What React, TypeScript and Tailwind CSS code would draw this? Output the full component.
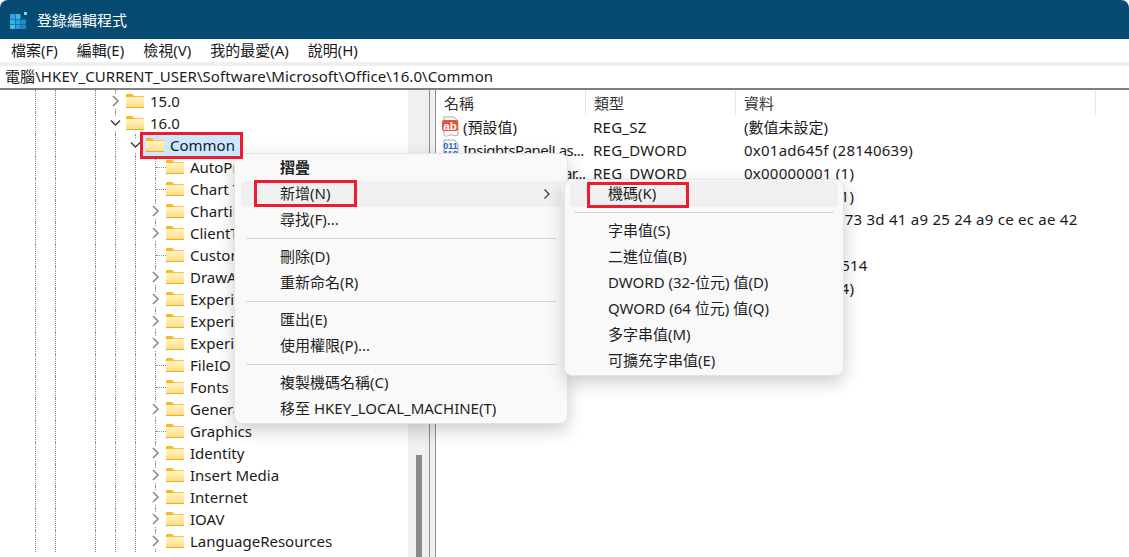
import React from "react";

const FONT = "[font-family:'Noto_Sans','Noto_Sans_CJK_TC',sans-serif]";

function Folder() {
  return (
    <svg width="18" height="14" viewBox="0 0 18 14" className="shrink-0">
      <defs>
        <linearGradient id="fb" x1="0" y1="0" x2="0" y2="1">
          <stop offset="0" stopColor="#fff2c2" />
          <stop offset="0.6" stopColor="#ffe79f" />
          <stop offset="1" stopColor="#fcd873" />
        </linearGradient>
      </defs>
      <path d="M0 1C0 .4.4 0 1 0h5l2 2v2H0z" fill="#fbb81f" />
      <rect x="0" y="3" width="18" height="11" fill="url(#fb)" />
      <path d="M0 3h7l1.5-1H18v1z" fill="#fcc63f" />
      <rect x="0" y="13" width="18" height="1" fill="#eeab2c" />
    </svg>
  );
}

function Chevron({ open }: { open?: boolean }) {
  return (
    <svg width="14" height="14" viewBox="0 0 14 14" className="bg-white">
      {open ? (
        <path d="M3 4.5 7.5 9 12 4.5" fill="none" stroke="#3c3c3c" strokeWidth="1.4" />
      ) : (
        <path d="M5 2 10 7l-5 5" fill="none" stroke="#8a8a8a" strokeWidth="1.6" />
      )}
    </svg>
  );
}

type Level = "a" | "b" | "c";

function Guides({ level }: { level: Level }) {
  const line = "w-5 h-full shrink-0 border-l border-dotted border-[#8c8c8c]";
  return (
    <>
      <div className={line} />
      <div className={line} />
      <div className="w-5 h-full shrink-0" />
      <div className={line} />
      {level !== "a" && <div className={line} />}
      {level === "c" && <div className={line} />}
    </>
  );
}

function Expander({ kids, open }: { kids?: boolean; open?: boolean }) {
  return (
    <div className="relative w-[11px] h-full shrink-0 border-l border-dotted border-[#8c8c8c]">
      {kids ? (
        <div className="absolute -left-[8px] top-[4px]">
          <Chevron open={open} />
        </div>
      ) : (
        <div className="absolute left-0 top-[11px] w-[10px] border-t border-dotted border-[#8c8c8c]" />
      )}
    </div>
  );
}

function TreeRow({ level, label, kids, open }: { level: Level; label: string; kids?: boolean; open?: boolean }) {
  return (
    <div className="flex h-[22px] items-center pl-[35px]">
      <Guides level={level} />
      <Expander kids={kids} open={open} />
      <Folder />
      <span className="ml-[6px] whitespace-nowrap">{label}</span>
    </div>
  );
}

const children: [string, boolean][] = [
  ["AutoProof", false],
  ["Chart Templates", false],
  ["Charting", true],
  ["ClientTelemetry", true],
  ["CustomUI", false],
  ["DrawAlerts", true],
  ["Experiment", true],
  ["ExperimentEcs", true],
  ["ExperimentTas", true],
  ["FileIO", false],
  ["Fonts", false],
  ["General", true],
  ["Graphics", false],
  ["Identity", true],
  ["Insert Media", true],
  ["Internet", true],
  ["IOAV", true],
  ["LanguageResources", true],
];

function AbIcon() {
  return (
    <svg width="19" height="22" viewBox="0 0 19 22" className="shrink-0">
      <path d="M3 1h10l4 4v14c-3 2-5-1-8 0s-4 2-6 0z" fill="#fff" stroke="#a8a8a8" />
      <rect x="1" y="4" width="16" height="11" rx="2" fill="#e2563a" />
      <text x="9" y="13.5" textAnchor="middle" fontSize="11.5" fontWeight="700" fill="#fff" fontFamily="'Liberation Sans',sans-serif">ab</text>
    </svg>
  );
}

function BinIcon() {
  return (
    <svg width="19" height="22" viewBox="0 0 19 22" className="shrink-0">
      <path d="M3 1h10l4 4v14c-3 2-5-1-8 0s-4 2-6 0z" fill="#fff" stroke="#a8a8a8" />
      <text x="9.5" y="10" textAnchor="middle" fontSize="9" fontWeight="700" fill="#2f5fc0" fontFamily="'Liberation Sans',sans-serif">011</text>
      <text x="9.5" y="18" textAnchor="middle" fontSize="9" fontWeight="700" fill="#2f5fc0" fontFamily="'Liberation Sans',sans-serif">110</text>
    </svg>
  );
}

const values: [React.ReactNode, string, string, string][] = [
  [<AbIcon />, "(預設值)", "REG_SZ", "(數值未設定)"],
  [<BinIcon />, "InsightsPanelLas...", "REG_DWORD", "0x01ad645f (28140639)"],
  [<BinIcon />, "InsightsPanelStar...", "REG_DWORD", "0x00000001 (1)"],
  [<BinIcon />, "LanguageSet", "REG_DWORD", "0x00000001 (1)"],
  [<BinIcon />, "MigrationData", "REG_BINARY", "f4 1c 8e 02 1f 73 3d 41 a9 25 24 a9 ce ec ae 42"],
  [<AbIcon />, "ProductId", "REG_SZ", ""],
  [<AbIcon />, "SessionId", "REG_SZ", "13324561004514"],
  [<BinIcon />, "UpdateFlag", "REG_DWORD", "0x00000004 (4)"],
];

function Item({ label, bold, hover, arrow, sub, children: extra }: { label: string; bold?: boolean; hover?: boolean; arrow?: boolean; sub?: boolean; children?: React.ReactNode }) {
  return (
    <div className={`relative h-[26px] flex items-center pb-[2px] rounded-[4px] ${sub ? "mx-[5px] pl-[38px]" : "mx-[6px] pl-[39px]"} ${hover ? "bg-[#f0f0f0]" : ""} ${bold ? "font-bold" : ""}`}>
      <span className="whitespace-nowrap">{label}</span>
      {arrow && (
        <svg width="10" height="12" viewBox="0 0 10 12" className="absolute right-[9px] top-[7px]">
          <path d="M2.5 1.5 7 6l-4.5 4.5" fill="none" stroke="#3a3a3a" strokeWidth="1.3" />
        </svg>
      )}
      {extra}
    </div>
  );
}

function Sep({ sub }: { sub?: boolean }) {
  return <div className={`h-px my-[5px] bg-[#d4d4d4] ${sub ? "mx-[9px]" : "mx-[11px]"}`} />;
}

export default function App() {
  return (
    <div className={`relative w-[1129px] h-[557px] overflow-hidden bg-white flex flex-col text-[15px] leading-[20px] text-[#1a1a1a] ${FONT}`}>
      <div className="h-[39px] shrink-0 bg-[#074a72] rounded-t-[8px] flex items-center pl-[10px] text-white">
        <svg width="19" height="19" viewBox="0 0 19 19" className="shrink-0">
          <rect x="0" y="4" width="5" height="5" fill="#2ba5e8" />
          <rect x="5.5" y="4" width="5" height="5" fill="#3cb4f0" />
          <rect x="0" y="9.5" width="5" height="5" fill="#35aef0" />
          <rect x="5.5" y="9.5" width="5" height="5" fill="#2f9fe0" />
          <rect x="11" y="9.5" width="5" height="5" fill="#1f8ccc" />
          <rect x="0" y="15" width="5" height="4" fill="#42bcf5" />
          <rect x="5.5" y="15" width="5" height="4" fill="#2c9ee0" />
          <rect x="11" y="15" width="5" height="4" fill="#1f88c8" />
          <rect x="14" y="2" width="3" height="3" fill="#7ad3fa" />
        </svg>
        <span className="ml-[8px]">登錄編輯程式</span>
      </div>

      <div className="h-[23px] shrink-0 flex items-center pb-[2px] pl-[11px] gap-[19px]">
        <span>檔案(F)</span>
        <span>編輯(E)</span>
        <span>檢視(V)</span>
        <span>我的最愛(A)</span>
        <span>說明(H)</span>
      </div>

      <div className="h-[4px] shrink-0 bg-[#f0f0f0]" />

      <div className="h-[22px] shrink-0 flex items-center pb-[2px] pl-[5px] whitespace-nowrap tracking-[0.085px]">
        電腦\HKEY_CURRENT_USER\Software\Microsoft\Office\16.0\Common
      </div>

      <div className="h-[2px] shrink-0 bg-[#808080]" />

      <div className="flex-1 flex min-h-0">
        <div className="w-[408px] shrink-0 overflow-hidden border-l border-[#c8c8c8] -ml-px box-content">
          <TreeRow level="a" label="15.0" kids />
          <TreeRow level="a" label="16.0" kids open />
          <div className="flex h-[22px] items-center pl-[35px]">
            <Guides level="b" />
            <div className="relative w-[5px] h-full shrink-0 border-l border-dotted border-[#8c8c8c]">
              <div className="absolute -left-[8px] top-[4px]">
                <Chevron open />
              </div>
            </div>
            <div className="relative z-10 flex items-center w-[103px] h-[27px] shrink-0 border-[3px] border-[#ed1c2e] bg-[#cce8ff] pl-[3px]">
              <Folder />
              <span className="ml-[6px]">Common</span>
            </div>
          </div>
          {children.map(([label, kids]) => (
            <TreeRow key={label} level="c" label={label} kids={kids} />
          ))}
        </div>

        <div className="w-[21px] shrink-0 bg-[#f0f0f0] flex justify-center">
          <div className="w-[6px] h-[102px] mt-[365px] bg-[#8a8a8a]" />
        </div>
        <div className="w-px shrink-0 bg-[#8f8f8f]" />
        <div className="w-[5px] shrink-0 bg-[#f0f0f0]" />
        <div className="w-px shrink-0 bg-[#8f8f8f]" />

        <div className="flex-1 min-w-0">
          <div className="flex h-[25px] text-[#333]">
            <div className="w-[150px] pl-[8px] flex items-center border-r border-[#e5e5e5]">名稱</div>
            <div className="w-[150px] pl-[8px] flex items-center border-r border-[#e5e5e5]">類型</div>
            <div className="w-[360px] pl-[8px] flex items-center border-r border-[#e5e5e5]">資料</div>
          </div>
          {values.map(([icon, name, type, data], i) => (
            <div key={i} className="flex h-[23px] items-center whitespace-nowrap">
              <div className="w-[150px] shrink-0 pl-[5px] flex items-center gap-[3px]">
                {icon}
                <span className={name.endsWith("...") ? "tracking-[-0.55px]" : ""}>{name}</span>
              </div>
              <div className="w-[150px] shrink-0 pl-[7px] tracking-[0.25px]">{type}</div>
              <div className={`pl-[8px] ${i === 0 ? "" : "tracking-[0.25px]"}`}>{data}</div>
            </div>
          ))}
        </div>
      </div>

      <div className="absolute left-[234px] top-[153px] w-[334px] h-[271px] py-[1px] bg-[#f9f9f9] border border-[#e4e4e4] rounded-[8px] shadow-[0_6px_18px_rgba(0,0,0,0.2)] text-[#1f1f1f]">
        <Item label="摺疊" bold />
        <Item label="新增(N)" hover arrow>
          <div className="absolute left-[13px] -top-[1px] w-[103px] h-[27px] border-[3px] border-[#ed1c2e]" />
        </Item>
        <Item label="尋找(F)..." />
        <Sep />
        <Item label="刪除(D)" />
        <Item label="重新命名(R)" />
        <Sep />
        <Item label="匯出(E)" />
        <Item label="使用權限(P)..." />
        <Sep />
        <Item label="複製機碼名稱(C)" />
        <Item label="移至 HKEY_LOCAL_MACHINE(T)" />
      </div>

      <div className="absolute left-[564px] top-[179px] w-[280px] h-[197px] py-[1px] bg-[#f9f9f9] border border-[#e4e4e4] rounded-[8px] shadow-[0_6px_18px_rgba(0,0,0,0.2)] text-[#1f1f1f]">
        <Item label="機碼(K)" hover sub>
          <div className="absolute left-[17px] top-[1px] w-[102px] h-[26px] border-[3px] border-[#ed1c2e]" />
        </Item>
        <Sep sub />
        <Item label="字串值(S)" sub />
        <Item label="二進位值(B)" sub />
        <Item label="DWORD (32-位元) 值(D)" sub />
        <Item label="QWORD (64 位元) 值(Q)" sub />
        <Item label="多字串值(M)" sub />
        <Item label="可擴充字串值(E)" sub />
      </div>
    </div>
  );
}
